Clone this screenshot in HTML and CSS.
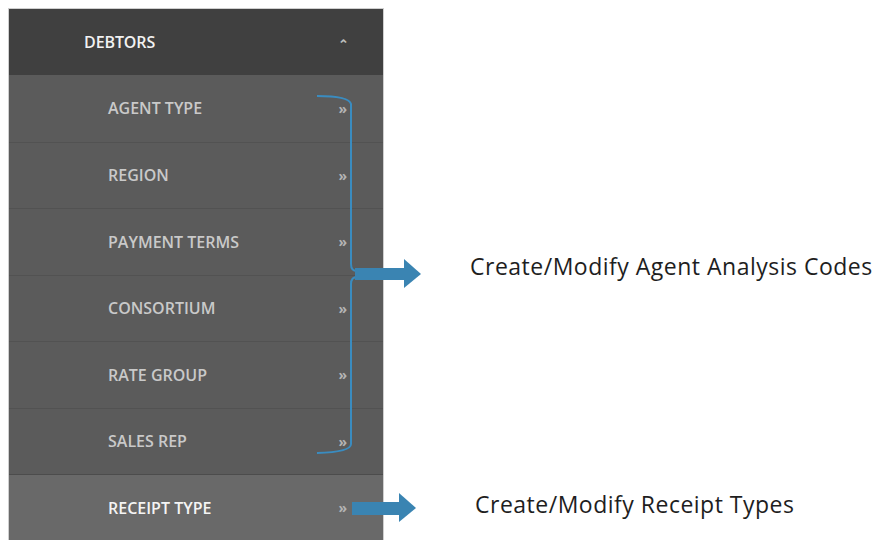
FILE: index.html
```html
<!DOCTYPE html>
<html lang="en">
  <head>
    <meta charset="UTF-8" />
    <meta name="viewport" content="width=device-width, initial-scale=1.0" />
    <title>Debtors Menu</title>
    <link rel="stylesheet" href="styles.css">
  </head>
  <body>
    <div class="page">
      <nav class="sidebar">
        <div class="menu-head">
          <span>DEBTORS</span>
          <span class="caret">&#8963;</span>
        </div>
        <ul class="submenu">
          <li><span>AGENT TYPE</span><span class="chev">&raquo;</span></li>
          <li><span>REGION</span><span class="chev">&raquo;</span></li>
          <li><span>PAYMENT TERMS</span><span class="chev">&raquo;</span></li>
          <li><span>CONSORTIUM</span><span class="chev">&raquo;</span></li>
          <li><span>RATE GROUP</span><span class="chev">&raquo;</span></li>
          <li><span>SALES REP</span><span class="chev">&raquo;</span></li>
          <li class="active"><span>RECEIPT TYPE</span><span class="chev">&raquo;</span></li>
        </ul>
      </nav>
    </div>

    <!-- annotations drawn over the screenshot -->
    <svg class="marks" width="877" height="540" viewBox="0 0 877 540">
      <path class="bracket" d="M317 96 Q349 96 351 104 L351 264 Q351 271 357 271" />
      <path class="bracket" d="M357 277 Q351 277 351 284 L351 444 Q351 452 317 453" />
      <rect class="arrow" x="355" y="268" width="50" height="12" />
      <polygon class="arrow" points="404,259 421,274 404,288" />
      <rect class="arrow" x="352" y="502" width="48" height="13" />
      <polygon class="arrow" points="399,493 416,508 399,522" />
    </svg>
    <p class="note note-agent">Create/Modify Agent Analysis Codes</p>
    <p class="note note-receipt">Create/Modify Receipt Types</p>
  </body>
</html>
```

FILE: styles.css
```css
body {
  margin: 0;
  padding: 0;
  background: #ffffff;
  font-family: "Open Sans", sans-serif;
  height: 540px;
  overflow: hidden;
}
.page {
  display: flex;
  padding: 8px 0 0 8px;
}
.sidebar {
  width: 374px;
  border: 1px solid #cfcfcf;
  border-bottom: none;
  background: #5b5b5b;
}
.menu-head {
  height: 66px;
  background: #404040;
  color: #f2f2f2;
  display: flex;
  align-items: center;
  justify-content: space-between;
  padding: 0 34px 0 75px;
  font-size: 16px;
  font-weight: 600;
  letter-spacing: -0.1px;
}
.caret {
  font-size: 13px;
  color: #bdbdbd;
  padding-top: 4px;
}
.submenu {
  list-style: none;
  margin: 0;
  padding: 0;
}
.submenu li {
  height: 66.5px;
  box-sizing: border-box;
  display: flex;
  align-items: center;
  justify-content: space-between;
  padding: 0 36px 0 99px;
  color: #c9c9c9;
  font-size: 16px;
  font-weight: 600;
  letter-spacing: 0;
  border-top: 1px solid #525252;
}
.submenu li:first-child {
  border-top: none;
}
.submenu li.active {
  background: #696969;
  color: #f4f4f4;
  border-top: 1px solid #4c4c4c;
}
.chev {
  color: #b4b4b4;
  font-size: 14px;
  font-weight: 700;
}
.marks {
  position: absolute;
  left: 0;
  top: 0;
}
.bracket {
  fill: none;
  stroke: #3a8cc0;
  stroke-width: 2;
}
.arrow {
  fill: #3a84b2;
}
.note {
  position: absolute;
  margin: 0;
  font-family: "Open Sans", sans-serif;
  font-size: 23px;
  letter-spacing: 0.5px;
  color: #1e1e1e;
  line-height: 1;
}
.note-agent {
  left: 470px;
  top: 255px;
}
.note-receipt {
  left: 475px;
  top: 493px;
}
```
